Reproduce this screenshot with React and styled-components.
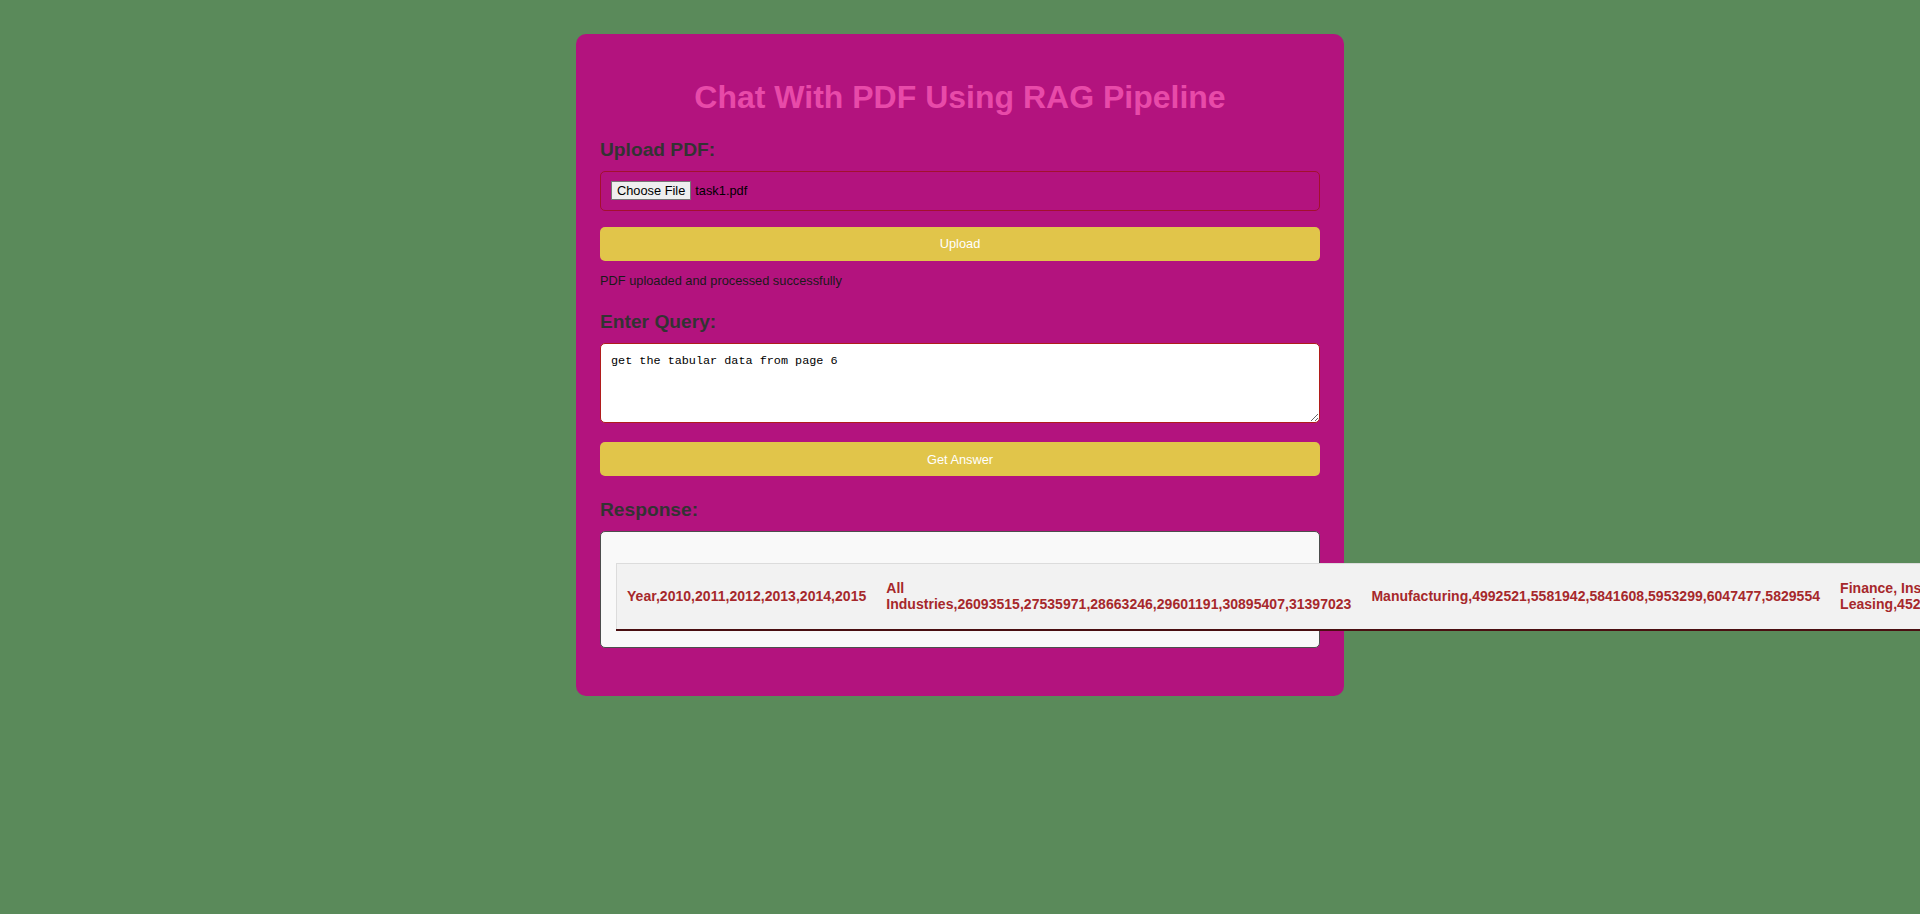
import React from "react";
import styled, { createGlobalStyle } from "styled-components";

const GlobalStyle = createGlobalStyle`
  html, body {
    margin: 0;
    padding: 0;
    background: #5a8a5a;
    font-family: "Liberation Sans", Arial, sans-serif;
    overflow-x: hidden;
  }
  #root { min-height: 100vh; }
`;

const Page = styled.div`
  min-height: 100vh;
  padding-top: 34px;
  box-sizing: border-box;
`;

const Card = styled.div`
  width: 768px;
  margin: 0 auto;
  box-sizing: border-box;
  padding: 24px 24px 48px;
  background: #b3137e;
  border-radius: 10px;
`;

const Title = styled.h1`
  margin: 21px 0 0;
  text-align: center;
  font-size: 32px;
  font-weight: bold;
  color: #e84aa9;
`;

const Label = styled.div`
  margin: 22.5px 0 10px;
  font-size: 19.2px;
  font-weight: bold;
  color: #333;
`;

const FileBox = styled.div`
  height: 40px;
  box-sizing: border-box;
  border: 1px solid #a3102e;
  border-radius: 5px;
  padding: 0 10px;
  display: flex;
  align-items: center;
  gap: 4px;
  font-size: 12.8px;
  color: #000;
`;

const FileButton = styled.button`
  font-family: "Liberation Sans", Arial, sans-serif;
  font-size: 12.8px;
  padding: 1px 5px;
  margin: 0;
  background: #efefef;
  border: 1px solid #767676;
  border-radius: 0;
  color: #000;
`;

const ActionButton = styled.button`
  display: block;
  width: 100%;
  height: 34px;
  margin-top: ${(p) => p.$mt}px;
  border: none;
  border-radius: 5px;
  background: #e1c54a;
  color: #fff;
  font-family: "Liberation Sans", Arial, sans-serif;
  font-size: 12.8px;
  cursor: pointer;
`;

const Message = styled.p`
  margin: 12.5px 0 0;
  font-size: 12.8px;
  color: #1a1a1a;
`;

const QueryArea = styled.textarea`
  display: block;
  width: 100%;
  height: 80px;
  box-sizing: border-box;
  padding: 10px;
  margin: 0;
  border: 1px solid #b01c1c;
  border-radius: 5px;
  background: #fff;
  font-family: "Liberation Mono", monospace;
  font-size: 11.8px;
  color: #000;
  outline: none;
`;

const ResponseBox = styled.div`
  border: 1px solid #4d4d4d;
  border-radius: 5px;
  background: #f9f9f9;
  padding: 15px 15px 16px;
`;

const Table = styled.table`
  margin-top: 16px;
  border-collapse: collapse;
  background: #f2f2f2;
  border-top: 1px solid #dcdcdc;
  border-left: 1px solid #dcdcdc;
`;

const HeadCell = styled.th`
  padding: 16px 10px 17px;
  text-align: left;
  vertical-align: middle;
  font-size: 14px;
  line-height: 16px;
  font-weight: bold;
  letter-spacing: 0.03px;
  color: #a6282b;
  border-bottom: 2px solid #4a0f12;
`;

const rows = [
  "Year,2010,2011,2012,2013,2014,2015",
  "All Industries,26093515,27535971,28663246,29601191,30895407,31397023",
  "Manufacturing,4992521,5581942,5841608,5953299,6047477,5829554",
  "Finance, Insurance, Real Estate, Rental, and Leasing,4522466,4676312,4857489,5044106,5301624,5470870",
  "Professional and Business Services,2661880,2780227,2934434,3010826,3171432,3325574",
  "Government,2814712,2848917,2868126,2874985,2930826,2994590",
];

export default function App() {
  return (
    <>
      <GlobalStyle />
      <Page>
        <Card>
          <Title>Chat With PDF Using RAG Pipeline</Title>
          <Label>Upload PDF:</Label>
          <FileBox>
            <FileButton type="button">Choose File</FileButton>
            <span>task1.pdf</span>
          </FileBox>
          <ActionButton $mt={16}>Upload</ActionButton>
          <Message>PDF uploaded and processed successfully</Message>
          <Label>Enter Query:</Label>
          <QueryArea defaultValue="get the tabular data from page 6" />
          <ActionButton $mt={19.5}>Get Answer</ActionButton>
          <Label>Response:</Label>
          <ResponseBox>
            <Table>
              <thead>
                <tr>
                  {rows.map((r) => (
                    <HeadCell key={r}>{r}</HeadCell>
                  ))}
                </tr>
              </thead>
            </Table>
          </ResponseBox>
        </Card>
      </Page>
    </>
  );
}
